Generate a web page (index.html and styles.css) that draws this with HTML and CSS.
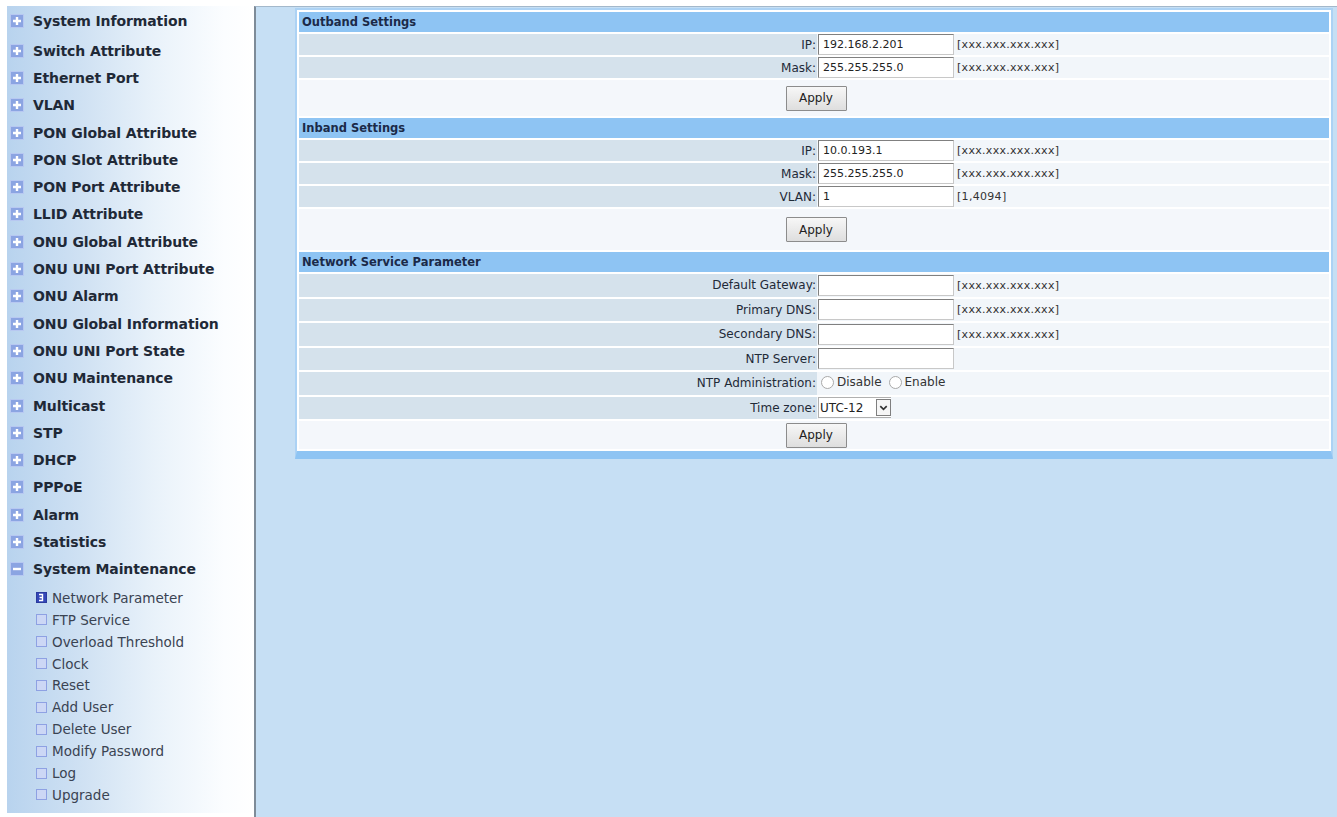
FILE: index.html
```html
<!DOCTYPE html>
<html>
<head>
<meta charset="utf-8">
<title>Network Parameter</title>
<link rel="stylesheet" href="styles.css">
</head>
<body>
<div class="page">
  <nav class="sidebar">
    <ul class="menu">
      <li class="item first"><span class="ico"><svg viewBox="0 0 14 14"><rect x="0.5" y="0.5" width="13" height="13" class="ibox"/><path d="M7 3v8M3 7h8" class="iplus"/></svg></span>System Information</li>
      <li class="item"><span class="ico"><svg viewBox="0 0 14 14"><rect x="0.5" y="0.5" width="13" height="13" class="ibox"/><path d="M7 3v8M3 7h8" class="iplus"/></svg></span>Switch Attribute</li>
      <li class="item"><span class="ico"><svg viewBox="0 0 14 14"><rect x="0.5" y="0.5" width="13" height="13" class="ibox"/><path d="M7 3v8M3 7h8" class="iplus"/></svg></span>Ethernet Port</li>
      <li class="item"><span class="ico"><svg viewBox="0 0 14 14"><rect x="0.5" y="0.5" width="13" height="13" class="ibox"/><path d="M7 3v8M3 7h8" class="iplus"/></svg></span>VLAN</li>
      <li class="item"><span class="ico"><svg viewBox="0 0 14 14"><rect x="0.5" y="0.5" width="13" height="13" class="ibox"/><path d="M7 3v8M3 7h8" class="iplus"/></svg></span>PON Global Attribute</li>
      <li class="item"><span class="ico"><svg viewBox="0 0 14 14"><rect x="0.5" y="0.5" width="13" height="13" class="ibox"/><path d="M7 3v8M3 7h8" class="iplus"/></svg></span>PON Slot Attribute</li>
      <li class="item"><span class="ico"><svg viewBox="0 0 14 14"><rect x="0.5" y="0.5" width="13" height="13" class="ibox"/><path d="M7 3v8M3 7h8" class="iplus"/></svg></span>PON Port Attribute</li>
      <li class="item"><span class="ico"><svg viewBox="0 0 14 14"><rect x="0.5" y="0.5" width="13" height="13" class="ibox"/><path d="M7 3v8M3 7h8" class="iplus"/></svg></span>LLID Attribute</li>
      <li class="item"><span class="ico"><svg viewBox="0 0 14 14"><rect x="0.5" y="0.5" width="13" height="13" class="ibox"/><path d="M7 3v8M3 7h8" class="iplus"/></svg></span>ONU Global Attribute</li>
      <li class="item"><span class="ico"><svg viewBox="0 0 14 14"><rect x="0.5" y="0.5" width="13" height="13" class="ibox"/><path d="M7 3v8M3 7h8" class="iplus"/></svg></span>ONU UNI Port Attribute</li>
      <li class="item"><span class="ico"><svg viewBox="0 0 14 14"><rect x="0.5" y="0.5" width="13" height="13" class="ibox"/><path d="M7 3v8M3 7h8" class="iplus"/></svg></span>ONU Alarm</li>
      <li class="item"><span class="ico"><svg viewBox="0 0 14 14"><rect x="0.5" y="0.5" width="13" height="13" class="ibox"/><path d="M7 3v8M3 7h8" class="iplus"/></svg></span>ONU Global Information</li>
      <li class="item"><span class="ico"><svg viewBox="0 0 14 14"><rect x="0.5" y="0.5" width="13" height="13" class="ibox"/><path d="M7 3v8M3 7h8" class="iplus"/></svg></span>ONU UNI Port State</li>
      <li class="item"><span class="ico"><svg viewBox="0 0 14 14"><rect x="0.5" y="0.5" width="13" height="13" class="ibox"/><path d="M7 3v8M3 7h8" class="iplus"/></svg></span>ONU Maintenance</li>
      <li class="item"><span class="ico"><svg viewBox="0 0 14 14"><rect x="0.5" y="0.5" width="13" height="13" class="ibox"/><path d="M7 3v8M3 7h8" class="iplus"/></svg></span>Multicast</li>
      <li class="item"><span class="ico"><svg viewBox="0 0 14 14"><rect x="0.5" y="0.5" width="13" height="13" class="ibox"/><path d="M7 3v8M3 7h8" class="iplus"/></svg></span>STP</li>
      <li class="item"><span class="ico"><svg viewBox="0 0 14 14"><rect x="0.5" y="0.5" width="13" height="13" class="ibox"/><path d="M7 3v8M3 7h8" class="iplus"/></svg></span>DHCP</li>
      <li class="item"><span class="ico"><svg viewBox="0 0 14 14"><rect x="0.5" y="0.5" width="13" height="13" class="ibox"/><path d="M7 3v8M3 7h8" class="iplus"/></svg></span>PPPoE</li>
      <li class="item"><span class="ico"><svg viewBox="0 0 14 14"><rect x="0.5" y="0.5" width="13" height="13" class="ibox"/><path d="M7 3v8M3 7h8" class="iplus"/></svg></span>Alarm</li>
      <li class="item"><span class="ico"><svg viewBox="0 0 14 14"><rect x="0.5" y="0.5" width="13" height="13" class="ibox"/><path d="M7 3v8M3 7h8" class="iplus"/></svg></span>Statistics</li>
      <li class="item"><span class="ico"><svg viewBox="0 0 14 14"><rect x="0.5" y="0.5" width="13" height="13" class="ibox"/><path d="M3 7h8" class="iplus"/></svg></span>System Maintenance</li>
    </ul>
    <ul class="sub">
      <li class="subitem"><span class="sico"><svg viewBox="0 0 11 11"><rect x="0.5" y="0.5" width="10" height="10" class="sbox-on"/><path d="M3 2.5h3.5v6H3M3.5 5.5h3" class="sarrow"/></svg></span>Network Parameter</li>
      <li class="subitem"><span class="sico"><svg viewBox="0 0 11 11"><rect x="0.5" y="0.5" width="10" height="10" class="sbox"/></svg></span>FTP Service</li>
      <li class="subitem"><span class="sico"><svg viewBox="0 0 11 11"><rect x="0.5" y="0.5" width="10" height="10" class="sbox"/></svg></span>Overload Threshold</li>
      <li class="subitem"><span class="sico"><svg viewBox="0 0 11 11"><rect x="0.5" y="0.5" width="10" height="10" class="sbox"/></svg></span>Clock</li>
      <li class="subitem"><span class="sico"><svg viewBox="0 0 11 11"><rect x="0.5" y="0.5" width="10" height="10" class="sbox"/></svg></span>Reset</li>
      <li class="subitem"><span class="sico"><svg viewBox="0 0 11 11"><rect x="0.5" y="0.5" width="10" height="10" class="sbox"/></svg></span>Add User</li>
      <li class="subitem"><span class="sico"><svg viewBox="0 0 11 11"><rect x="0.5" y="0.5" width="10" height="10" class="sbox"/></svg></span>Delete User</li>
      <li class="subitem"><span class="sico"><svg viewBox="0 0 11 11"><rect x="0.5" y="0.5" width="10" height="10" class="sbox"/></svg></span>Modify Password</li>
      <li class="subitem"><span class="sico"><svg viewBox="0 0 11 11"><rect x="0.5" y="0.5" width="10" height="10" class="sbox"/></svg></span>Log</li>
      <li class="subitem"><span class="sico"><svg viewBox="0 0 11 11"><rect x="0.5" y="0.5" width="10" height="10" class="sbox"/></svg></span>Upgrade</li>
    </ul>
  </nav>
  <main class="main">
    <div class="panel">
      <table class="form">
        <tr class="hdr"><th colspan="2">Outband Settings</th></tr>
        <tr class="row"><td class="lbl">IP:</td><td class="val"><input class="txt" type="text" value="192.168.2.201"><span class="hint">[xxx.xxx.xxx.xxx]</span></td></tr>
        <tr class="row"><td class="lbl">Mask:</td><td class="val"><input class="txt" type="text" value="255.255.255.0"><span class="hint">[xxx.xxx.xxx.xxx]</span></td></tr>
        <tr class="act act1"><td colspan="2"><button class="btn" type="button">Apply</button></td></tr>
        <tr class="hdr"><th colspan="2">Inband Settings</th></tr>
        <tr class="row"><td class="lbl">IP:</td><td class="val"><input class="txt" type="text" value="10.0.193.1"><span class="hint">[xxx.xxx.xxx.xxx]</span></td></tr>
        <tr class="row"><td class="lbl">Mask:</td><td class="val"><input class="txt" type="text" value="255.255.255.0"><span class="hint">[xxx.xxx.xxx.xxx]</span></td></tr>
        <tr class="row"><td class="lbl">VLAN:</td><td class="val"><input class="txt" type="text" value="1"><span class="hint">[1,4094]</span></td></tr>
        <tr class="act act2"><td colspan="2"><button class="btn" type="button">Apply</button></td></tr>
        <tr class="hdr"><th colspan="2">Network Service Parameter</th></tr>
        <tr class="row wide"><td class="lbl">Default Gateway:</td><td class="val"><input class="txt" type="text" value=""><span class="hint">[xxx.xxx.xxx.xxx]</span></td></tr>
        <tr class="row wide"><td class="lbl">Primary DNS:</td><td class="val"><input class="txt" type="text" value=""><span class="hint">[xxx.xxx.xxx.xxx]</span></td></tr>
        <tr class="row wide"><td class="lbl">Secondary DNS:</td><td class="val"><input class="txt" type="text" value=""><span class="hint">[xxx.xxx.xxx.xxx]</span></td></tr>
        <tr class="row wide"><td class="lbl">NTP Server:</td><td class="val"><input class="txt" type="text" value=""></td></tr>
        <tr class="row wide"><td class="lbl">NTP Administration:</td><td class="val"><label class="opt"><input class="radio" type="radio" name="ntp">Disable</label><label class="opt"><input class="radio" type="radio" name="ntp">Enable</label></td></tr>
        <tr class="row wide"><td class="lbl">Time zone:</td><td class="val"><span class="sel"><span class="sel-text">UTC-12</span><span class="sel-btn"><svg viewBox="0 0 12 12"><path d="M2.5 4.5L6 8l3.5-3.5" class="chev"/></svg></span></span></td></tr>
        <tr class="act act3"><td colspan="2"><button class="btn" type="button">Apply</button></td></tr>
      </table>
    </div>
  </main>
</div>
</body>
</html>
```
FILE: styles.css
```css
html, body {
  margin: 0;
  padding: 0;
  background: #ffffff;
}
body {
  font-family: "DejaVu Sans", Verdana, sans-serif;
  color: #222;
}
.page {
  display: flex;
  height: 817px;
  box-sizing: border-box;
  padding: 6px 0 0 7px;
  overflow: hidden;
}
.sidebar {
  width: 247px;
  height: 807px;
  flex: none;
  box-sizing: border-box;
  padding: 1px 0 0 3px;
  background: linear-gradient(to right, #b8d3ee 0%, #cfe1f3 30%, #e9f2fa 60%, #fbfdff 88%, #ffffff 100%);
}
.menu, .sub {
  list-style: none;
  margin: 0;
  padding: 0;
}
.item {
  height: 27.3px;
  display: flex;
  align-items: center;
  font-weight: bold;
  font-size: 14px;
  color: #1f2937;
  white-space: nowrap;
  letter-spacing: -0.1px;
}
.item.first {
  height: 30px;
  padding-bottom: 2.7px;
  box-sizing: border-box;
}
.ico {
  width: 14px;
  height: 14px;
  margin-right: 9px;
  flex: none;
  display: block;
}
.ico svg, .sico svg {
  display: block;
  width: 100%;
  height: 100%;
}
.ibox {
  fill: #8ba4e2;
  stroke: #b7c8f1;
  stroke-width: 1;
}
.iplus {
  stroke: #ffffff;
  stroke-width: 2.4;
  fill: none;
}
.sub {
  margin-top: 4px;
}
.subitem {
  height: 21.9px;
  display: flex;
  align-items: center;
  padding-left: 26px;
  font-size: 13.5px;
  color: #3a4352;
  white-space: nowrap;
}
.sico {
  width: 11px;
  height: 11px;
  margin-right: 5px;
  flex: none;
  display: block;
}
.sbox {
  fill: #ccd7f5;
  stroke: #8ea1e3;
  stroke-width: 1;
}
.sbox-on {
  fill: #3447b8;
  stroke: #2a3a9e;
  stroke-width: 1;
}
.sarrow {
  stroke: #ffffff;
  stroke-width: 1.4;
  fill: none;
}
.main {
  flex: 1;
  height: 813px;
  background: #c6dff4;
  border-left: 2px solid #7e8b98;
  border-top: 1px solid #a3b8cb;
  padding: 1px 4px 0 39px;
  box-sizing: content-box;
}
.panel {
  background: #ffffff;
  border: 2px solid #acd2f4;
  border-bottom: 8px solid #8ec4f3;
  padding: 0 2px;
}
.form {
  width: 100%;
  border-collapse: separate;
  border-spacing: 0 2px;
  margin: 0;
}
.form td, .form th {
  padding: 0;
}
.hdr th {
  height: 20px;
  background: #8ec4f3;
  text-align: left;
  padding-left: 3px;
  font-size: 11.5px;
  font-weight: bold;
  color: #1b2a48;
}
.row td {
  height: 21px;
}
.row.wide td {
  height: 22.5px;
}
.lbl {
  width: 517px;
  background: #d5e2ec;
  text-align: right;
  padding-right: 1px !important;
  font-size: 12px;
  color: #1f2a38;
  white-space: nowrap;
}
.val {
  background: #f2f6fa;
  padding-left: 1px !important;
  font-size: 12px;
  white-space: nowrap;
}
.txt {
  width: 136px;
  height: 21px;
  box-sizing: border-box;
  border: 1px solid #808080;
  border-right-color: #c8c8c8;
  border-bottom-color: #c8c8c8;
  padding: 0 4px;
  margin: 0;
  vertical-align: middle;
  font-family: "DejaVu Sans", Verdana, sans-serif;
  font-size: 11px;
  color: #222;
  background: #fff;
}
.hint {
  display: inline-block;
  vertical-align: middle;
  margin-left: 3px;
  font-size: 11px;
  color: #333;
  letter-spacing: 0.3px;
}
.act td {
  background: #f4f7fb;
  text-align: center;
  padding-left: 4px;
}
.act1 td { height: 36px; }
.act2 td { height: 41px; }
.act3 td { height: 28px; }
.btn {
  width: 61px;
  height: 25px;
  border: 1px solid #8c8c8c;
  background: linear-gradient(#f7f7f7, #dedede);
  font-family: "DejaVu Sans", Verdana, sans-serif;
  font-size: 12px;
  color: #222;
  padding: 0;
  margin: 0;
  border-radius: 1px;
  vertical-align: middle;
}
.opt {
  display: inline-flex;
  align-items: center;
  margin-right: 4px;
  font-size: 12px;
  color: #333;
}
.radio {
  -webkit-appearance: none;
  appearance: none;
  width: 13px;
  height: 13px;
  border: 1px solid #a9a9a9;
  border-radius: 50%;
  background: #fff;
  margin: 0 3px 0 3px;
}
.sel {
  display: inline-flex;
  align-items: center;
  height: 21px;
  box-sizing: border-box;
  border: 1px solid #b0b0b0;
  border-right: none;
  background: #fff;
  vertical-align: middle;
}
.sel-text {
  font-size: 12px;
  color: #222;
  padding: 0 13px 0 1px;
}
.sel-btn {
  width: 15px;
  height: 17px;
  box-sizing: border-box;
  border: 1px solid #7f7f7f;
  background: #f6f6f6;
  display: flex;
  align-items: center;
  justify-content: center;
}
.sel-btn svg {
  width: 11px;
  height: 11px;
  display: block;
}
.chev {
  stroke: #333;
  stroke-width: 1.8;
  fill: none;
}
```
